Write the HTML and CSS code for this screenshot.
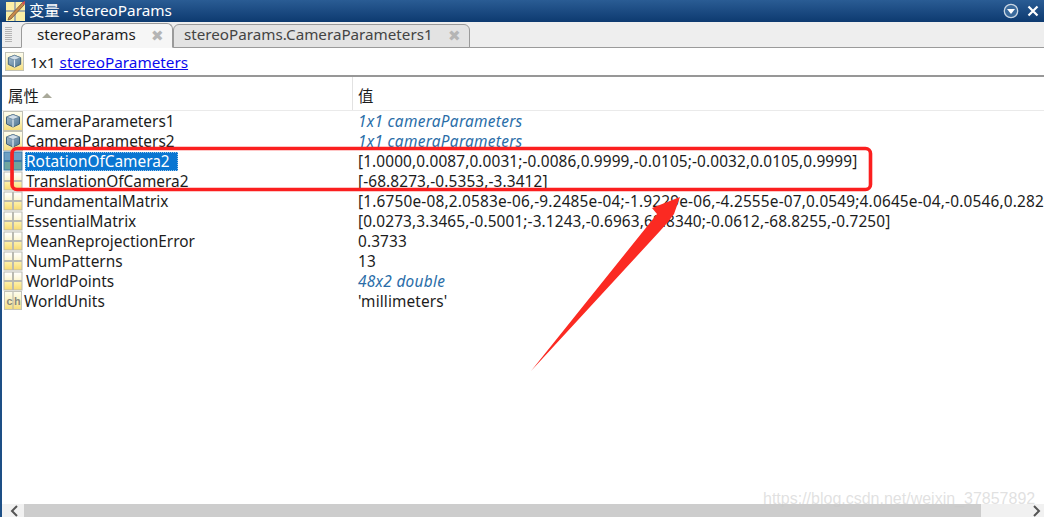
FILE: index.html
```html
<!DOCTYPE html>
<html lang="zh">
<head>
<meta charset="utf-8">
<title>变量 - stereoParams</title>
<link rel="stylesheet" href="styles.css">
</head>
<body>
<svg class="defs" width="0" height="0" aria-hidden="true">
  <defs>
    <linearGradient id="gy" x1="0" y1="0" x2="0" y2="1"><stop offset="0" stop-color="#fefdf0"/><stop offset=".45" stop-color="#fbf3c4"/><stop offset="1" stop-color="#f5dc78"/></linearGradient>
    <linearGradient id="gw" x1="0" y1="0" x2="0" y2="1"><stop offset="0" stop-color="#ffffff"/><stop offset="1" stop-color="#fdf6d2"/></linearGradient>
    <linearGradient id="gb" x1="0" y1="0" x2="0" y2="1"><stop offset="0" stop-color="#fdf0a8"/><stop offset="1" stop-color="#f8dc74"/></linearGradient>
    <linearGradient id="cb" x1="0" y1="0" x2="1" y2="1"><stop offset="0" stop-color="#a9c0d2"/><stop offset="1" stop-color="#4f7592"/></linearGradient>
    <symbol id="cube" viewBox="0 0 20 20">
      <rect x="0.5" y="0.5" width="19" height="19" fill="url(#gy)" stroke="#c0c0b4"/>
      <path d="M10 3.5 L16.5 6 V13 L10 16 L3.5 13 V6 Z" fill="url(#cb)" stroke="#3f5f78"/>
      <path d="M3.5 6 L10 8.5 L16.5 6 L10 3.5 Z" fill="#d2dfe9" stroke="#5f7e96" stroke-width=".7"/>
      <path d="M10 8.5 V16" stroke="#e3ecf2" stroke-width="1.2"/>
    </symbol>
    <symbol id="grid" viewBox="0 0 20 20">
      <rect x="0.5" y="0.5" width="19" height="19" fill="#b9b9b0"/>
      <rect x="1.5" y="1.5" width="7.5" height="7.5" fill="url(#gw)"/>
      <rect x="11" y="1.5" width="7.5" height="7.5" fill="url(#gw)"/>
      <rect x="1.5" y="11" width="7.5" height="7.5" fill="url(#gb)"/>
      <rect x="11" y="11" width="7.5" height="7.5" fill="url(#gb)"/>
    </symbol>
    <symbol id="gridsel" viewBox="0 0 20 20">
      <rect x="0.5" y="0.5" width="19" height="19" fill="#3f78a6"/>
      <rect x="1.5" y="1.5" width="7.5" height="7.5" fill="#6c9fc4"/>
      <rect x="11" y="1.5" width="7.5" height="7.5" fill="#6c9fc4"/>
      <rect x="1.5" y="11" width="7.5" height="7.5" fill="#6fa59f"/>
      <rect x="11" y="11" width="7.5" height="7.5" fill="#6fa59f"/>
    </symbol>
    <symbol id="char" viewBox="0 0 20 20">
      <rect x="1.5" y="0.5" width="17" height="18" fill="url(#gy)" stroke="#c4c4ba"/>
      <path d="M10 1V18" stroke="#b0b0a8"/>
      <text x="3.2" y="14" class="ch-text">c</text>
      <text x="11" y="14" class="ch-text">h</text>
    </symbol>
  </defs>
</svg>
<div class="window">
  <header class="titlebar">
    <svg class="app-icon" viewBox="0 0 22 22" width="22" height="22">
      <rect x="3" y="2" width="19" height="19" fill="#fbeea6"/>
      <path d="M3 11H22M12 2V21" stroke="#8d9aa8" stroke-width="1.5"/>
      <path d="M6 17 L19 3 L22 1 L21 5 L8 19 L5 20 Z" fill="#c98a4b" stroke="#6b4a2a" stroke-width=".7"/>
      <path d="M19 3 L22 1 L21 5 Z" fill="#e0455f"/>
    </svg>
    <span class="title">变量 - stereoParams</span>
    <span class="title-actions">
      <svg viewBox="0 0 16 16" width="16" height="16"><circle cx="8" cy="8" r="6.7" fill="#3a6a9c" stroke="#c9d6e3" stroke-width="1.3"/><path d="M4 6H12L8 11Z" fill="#fff"/></svg>
      <svg viewBox="0 0 12 12" width="12" height="12"><path d="M1.5 1.5L10.5 10.5M10.5 1.5L1.5 10.5" stroke="#fff" stroke-width="2.2"/></svg>
    </span>
  </header>
  <nav class="tabs">
    <span class="grip"></span>
    <div class="tab active"><span class="tab-name">stereoParams</span><span class="tab-x">✖</span></div>
    <div class="tab"><span class="tab-name">stereoParams.CameraParameters1</span><span class="tab-x">✖</span></div>
  </nav>
  <div class="infobar">
    <svg class="icon"><use href="#cube"/></svg>
    <span>1x1 <a class="link" href="#">stereoParameters</a></span>
  </div>
  <main class="table">
    <div class="thead">
      <div class="c1 th">属性<span class="sort"></span></div>
      <div class="c2 th">值</div>
    </div>
    <div class="row"><svg class="icon"><use href="#cube"/></svg><div class="c1"><span class="name">CameraParameters1</span></div><div class="c2 ref">1x1 cameraParameters</div></div>
    <div class="row"><svg class="icon"><use href="#cube"/></svg><div class="c1"><span class="name">CameraParameters2</span></div><div class="c2 ref">1x1 cameraParameters</div></div>
    <div class="row"><svg class="icon"><use href="#gridsel"/></svg><div class="c1"><span class="name selected">RotationOfCamera2</span></div><div class="c2">[1.0000,0.0087,0.0031;-0.0086,0.9999,-0.0105;-0.0032,0.0105,0.9999]</div></div>
    <div class="row"><svg class="icon"><use href="#grid"/></svg><div class="c1"><span class="name">TranslationOfCamera2</span></div><div class="c2">[-68.8273,-0.5353,-3.3412]</div></div>
    <div class="row"><svg class="icon"><use href="#grid"/></svg><div class="c1"><span class="name">FundamentalMatrix</span></div><div class="c2 long">[1.6750e-08,2.0583e-06,-9.2485e-04;-1.9229e-06,-4.2555e-07,0.0549;4.0645e-04,-0.0546,0.2825]</div></div>
    <div class="row"><svg class="icon"><use href="#grid"/></svg><div class="c1"><span class="name">EssentialMatrix</span></div><div class="c2">[0.0273,3.3465,-0.5001;-3.1243,-0.6963,68.8340;-0.0612,-68.8255,-0.7250]</div></div>
    <div class="row"><svg class="icon"><use href="#grid"/></svg><div class="c1"><span class="name">MeanReprojectionError</span></div><div class="c2">0.3733</div></div>
    <div class="row"><svg class="icon"><use href="#grid"/></svg><div class="c1"><span class="name">NumPatterns</span></div><div class="c2">13</div></div>
    <div class="row"><svg class="icon"><use href="#grid"/></svg><div class="c1"><span class="name">WorldPoints</span></div><div class="c2 ref">48x2 double</div></div>
    <div class="row"><svg class="icon"><use href="#char"/></svg><div class="c1"><span class="name units">WorldUnits</span></div><div class="c2">'millimeters'</div></div>
  </main>
  <footer class="hscroll">
    <svg viewBox="0 0 22 13" class="arrow"><path d="M15 2L10 7L15 12" fill="none" stroke="#555" stroke-width="2"/></svg>
    <div class="thumb"></div>
    <svg viewBox="0 0 63 13" class="arrow right"><path d="M53 2L58 7L53 12" fill="none" stroke="#555" stroke-width="2"/></svg>
  </footer>
</div>
<div class="watermark">https://blog.csdn.net/weixin_37857892</div>
<svg class="annotation" viewBox="0 0 1044 517" width="1044" height="517">
  <rect x="12" y="148.5" width="858.5" height="41" rx="5" fill="none" stroke="#fb1f1f" stroke-width="3.6"/>
  <path d="M531 371 L657 214 L652 208 L680 197 L674 214 L668 222 L660 231 Z" fill="#fb2a22"/>
</svg>
</body>
</html>
```
FILE: styles.css
```css
* { box-sizing: border-box; }
html, body { margin: 0; height: 100%; overflow: hidden; background: #fff; }
body { font-family: "Noto Sans", "Noto Sans CJK SC", sans-serif; font-size: 15.3px; color: #1c1c1c; position: relative; }
.defs { position: absolute; }
.ch-text { font-family: "Liberation Mono", monospace; font-size: 11px; font-weight: 700; fill: #8a8a80; }
.window { width: 1044px; height: 517px; display: flex; flex-direction: column; border-left: 2px solid #1d4f86; }
.titlebar { height: 22px; flex: none; margin-left: -2px; display: flex; align-items: center; color: #fff; background: linear-gradient(#2a5c94, #0d3a70); }
.app-icon { flex: none; margin-left: 3px; }
.title { margin-left: 4px; font-size: 15.3px; padding-bottom: 5px; }
.title-actions { margin-left: auto; margin-right: 5px; display: flex; align-items: center; gap: 8px; }
.tabs { height: 26px; flex: none; display: flex; align-items: flex-end; background: #eee; border-bottom: 1px solid #9a9a9a; padding-left: 3px; }
.grip { width: 7px; height: 16px; margin: 0 9px 4px 0; background: repeating-linear-gradient(#b5b5b5 0 1px, transparent 1px 2px); flex: none; }
.tab { height: 24px; display: flex; align-items: center; justify-content: space-between; border: 1px solid #9a9a9a; border-radius: 6px 6px 0 0; background: #e3e3e3; padding: 0 8px 0 10px; margin-left: -1px; color: #444; margin-bottom: -1px; font-size: 15.2px; }
.tab.active { background: #f6f6f6; width: 152px; color: #1c1c1c; border-bottom-color: #f6f6f6; height: 25px; padding-left: 15px; margin-left: 0; margin-right: 1px; }
.tab-name { white-space: nowrap; padding-bottom: 4px; }
.tab-x { color: #b5b5b5; font-size: 15px; margin-left: 15px; padding-bottom: 2px; }
.infobar { height: 29px; flex: none; display: flex; align-items: center; gap: 6px; padding-left: 3px; border-bottom: 2px solid #979797; background: #fff; }
.infobar .icon { width: 19px; height: 19px; }
.link { color: #0b0bee; }
.table { flex: 1; min-height: 0; position: relative; font-size: 15.4px; }
.thead { height: 34px; display: flex; border-bottom: 1px solid #eaeaea; }
.th { display: flex; align-items: center; padding-top: 3px; }
.c1 { width: 351px; flex: none; white-space: nowrap; }
.thead .c1 { padding-left: 6px; border-right: 1px solid #e2e2e2; }
.thead .c2 { padding-left: 5px; }
.sort { width: 0; height: 0; margin-left: 3px; border: 5px solid transparent; border-top: 0; border-bottom: 5px solid #a9a99a; }
.c2 { white-space: nowrap; }
.row { height: 20px; display: flex; align-items: center; line-height: 20px; }
.row .icon { width: 20px; height: 20px; flex: none; margin-left: 1px; }
.row .c1 { width: 330px; padding-left: 2px; padding-top: 1px; }
.name { display: inline-block; padding: 0 1px; line-height: 19px; }
.name.units { margin-left: -2px; }
.selected { background: #0a76d2; color: #fff; outline: 1px dotted #9cc6ea; outline-offset: -1px; padding-right: 8px; }
.row .c2 { padding-left: 5px; padding-top: 1px; letter-spacing: .12px; }
.row .c2.long { letter-spacing: .18px; }
.row .c2.ref { letter-spacing: .3px; color: #2a6da8; font-style: italic; }
.hscroll { height: 13px; flex: none; display: flex; background: #f1f1f1; }
.arrow { width: 22px; height: 13px; flex: none; }
.arrow.right { width: 63px; }
.thumb { flex: 1; background: #cdcdcd; }
.watermark { position: absolute; left: 763px; top: 490px; font-family: "Liberation Sans", sans-serif; font-size: 16px; color: rgba(200,200,200,.55); white-space: nowrap; }
.annotation { position: absolute; left: 0; top: 0; pointer-events: none; }
```
